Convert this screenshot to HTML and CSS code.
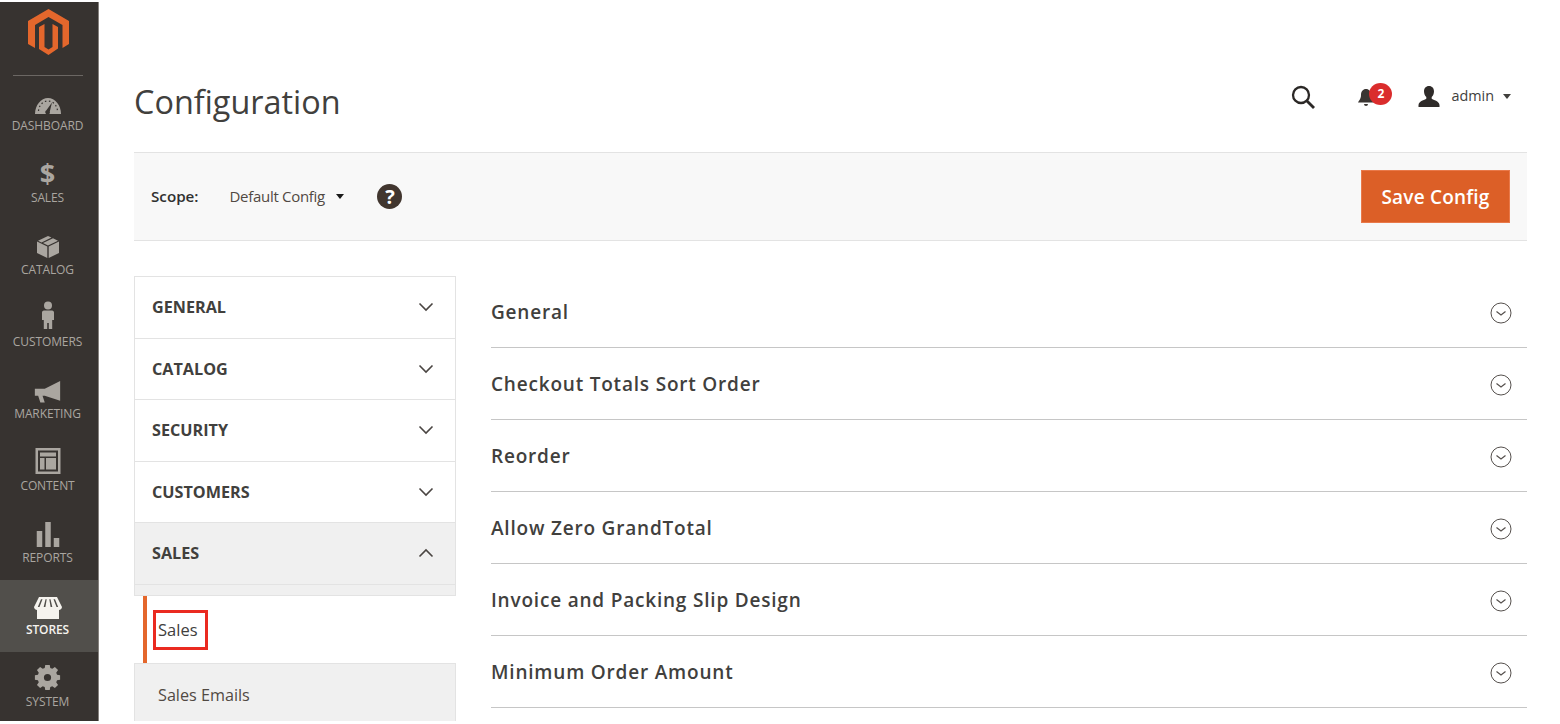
FILE: index.html
```html
<!DOCTYPE html>
<html lang="en">
<head>
<meta charset="utf-8">
<title>Configuration</title>
<link rel="stylesheet" href="styles.css">
</head>
<body>
<div class="page">
  <aside class="menu">
    <div class="logo-wrap">
      <svg class="logo" width="41" height="46" viewBox="28 9 41 46"><path fill="#e4672c" d="M48.5 9 69 21v23l-6.500 4V25L48.500 17 35 25v23l-7-4V21z"/><path fill="#e4672c" d="M39 27l5.500-3v23l4 2.500 4-2.500V24l5.500 3v21.500L48.500 55 39 49z"/></svg>
    </div>
    <nav class="menu-list">
      <a class="menu-item"><svg class="mi" width="30" height="18" viewBox="0 4 30 18"><path fill="#aaa6a0" d="M2 21C2 12 8 5 15 5s13 7 13 16z"/><path stroke="#373330" stroke-width="1.200" stroke-dasharray="1.500 2.500" fill="none" d="M5.500 18C6 12 10 8 15 8s9 4 9.500 10"/><path fill="#373330" d="M19 9.500 16.800 18.500a2.300 2.300 0 1 1-3.400-1.300z"/></svg><span>Dashboard</span></a>
      <a class="menu-item"><span class="dollar">$</span><span>Sales</span></a>
      <a class="menu-item"><svg class="mi" width="30" height="24" viewBox="0 0 30 24"><path fill="#aaa6a0" d="M4 6.500 14.300 11.600V23L4 18zM26 6.500 15.700 11.600V23L26 18zM15 1l3.500 1.600L8.500 7.500 5 5.800zM20 3.300l5 2.500-10 4.700-5-2.400z"/></svg><span>Catalog</span></a>
      <a class="menu-item"><svg class="mi" width="30" height="30" viewBox="0 0 30 30"><circle fill="#aaa6a0" cx="15" cy="4.500" r="4"/><path fill="#aaa6a0" d="M11 9.500h8c1.300 0 2 1 2 2V19h-1.800v9h-3.400v-6h-1.600v6h-3.400v-9H9v-7.500c0-1 .7-2 2-2z"/></svg><span>Customers</span></a>
      <a class="menu-item"><svg class="mi" width="33" height="22" viewBox="0.500 2 30 20"><path fill="#aaa6a0" d="M27 2v18L13 15.500h-2l2 6h-4l-2-6H4V9h9z"/></svg><span>Marketing</span></a>
      <a class="menu-item"><svg class="mi" width="30" height="28" viewBox="0 0 30 28"><path fill="#aaa6a0" fill-rule="evenodd" d="M2.500 1h25v26h-25zM5 3.500v21h20v-21zM7 5.500h16v4H7zM7 11h4.500v11.500H7zM13 11h10v11.500H13z"/></svg><span>Content</span></a>
      <a class="menu-item"><svg class="mi" width="30" height="25" viewBox="2.750 2 30 25"><path fill="#aaa6a0" d="M6.500 11H12v16H6.500zM15 2h5.500v25H15zM23.500 18H29v9h-5.500z"/></svg><span>Reports</span></a>
      <a class="menu-item active"><svg class="mi" width="30" height="24" viewBox="0 -1 30 24"><path fill="#f5f3ee" fill-rule="evenodd" d="M6 1h18l5 10c0 2-2 3-3 3v9H4v-9c-1 0-3-1-3-3zM8 3.300 4.800 11h1.700l3-7.700zM12.500 3.300 10.700 11h1.700l1.300-7.700zM16.300 3.300 17.600 11h1.700l-1.800-7.700zM20.500 3.300l3 7.700h1.700L22 3.300z"/></svg><span>Stores</span></a>
      <a class="menu-item"><svg class="mi" width="27" height="27" viewBox="0 0 30 30"><path fill="#aaa6a0" fill-rule="evenodd" d="M12.500 1h5l.6 3.400 2.200.9 2.900-2 3.500 3.500-2 2.900.9 2.200 3.400.6v5l-3.400.6-.9 2.200 2 2.900-3.500 3.500-2.900-2-2.200.9-.6 3.400h-5l-.6-3.400-2.200-.9-2.900 2-3.500-3.500 2-2.900-.9-2.200-3.400-.6v-5l3.400-.6.900-2.200-2-2.900 3.500-3.500 2.900 2 2.200-.9zM15 11a4 4 0 1 0 0 8 4 4 0 0 0 0-8z"/></svg><span>System</span></a>
    </nav>
  </aside>

  <main class="main">
    <header class="topbar">
      <h1 class="title">Configuration</h1>
      <div class="actions">
        <svg class="search" width="26" height="26" viewBox="0 -1.500 26 26"><circle cx="11" cy="10.500" r="8" fill="none" stroke="#2b2826" stroke-width="2.300"/><path d="M17 16.500l7 7" stroke="#2b2826" stroke-width="2.800" fill="none"/></svg>
        <div class="bell">
          <svg width="18" height="20" viewBox="0 0 18 20"><path fill="#3a3532" d="M9 1c3 0 5 2.500 5 6 0 4 2 5.500 3 7.500H1c1-2 3-3.500 3-7.500 0-3.500 2-6 5-6zM7 16h4a2 2 0 0 1-4 0z"/></svg>
          <span class="badge">2</span>
        </div>
        <div class="user">
          <svg width="24" height="23" viewBox="0 0 24 23"><path fill="#2f2b29" d="M12 1c3.200 0 5 2.300 5 5.300 0 2.500-1 4.700-2.300 5.700v1.800c1.800 1.200 7.300 2 7.800 6.200v2H1.500v-2c.5-4.200 6-5 7.800-6.200V12C8 11 7 8.800 7 6.300 7 3.300 8.800 1 12 1z"/></svg>
          <span class="user-name">admin</span>
          <span class="caret"></span>
        </div>
      </div>
    </header>

    <section class="scope">
      <div class="scope-left">
        <span class="scope-label">Scope:</span>
        <span class="scope-value">Default Config</span>
        <span class="caret scope-caret"></span>
        <span class="help">?</span>
      </div>
      <button class="save">Save Config</button>
    </section>

    <div class="columns">
      <div class="tabs">
        <div class="tab-group">
          <div class="tab"><span>General</span><svg class="chev" width="16" height="10" viewBox="0 0 16 10"><path d="M1.500 1.500 8 8l6.500-6.500" fill="none" stroke="#4a4542" stroke-width="1.600"/></svg></div>
          <div class="tab"><span>Catalog</span><svg class="chev" width="16" height="10" viewBox="0 0 16 10"><path d="M1.500 1.500 8 8l6.500-6.500" fill="none" stroke="#4a4542" stroke-width="1.600"/></svg></div>
          <div class="tab"><span>Security</span><svg class="chev" width="16" height="10" viewBox="0 0 16 10"><path d="M1.500 1.500 8 8l6.500-6.500" fill="none" stroke="#4a4542" stroke-width="1.600"/></svg></div>
          <div class="tab"><span>Customers</span><svg class="chev" width="16" height="10" viewBox="0 0 16 10"><path d="M1.500 1.500 8 8l6.500-6.500" fill="none" stroke="#4a4542" stroke-width="1.600"/></svg></div>
          <div class="tab tab-open"><span>Sales</span><svg class="chev" width="16" height="10" viewBox="0 0 16 10"><path d="M1.500 8.500 8 2l6.500 6.500" fill="none" stroke="#4a4542" stroke-width="1.600"/></svg></div>
          <div class="tab-gap"></div>
        </div>
        <div class="sub-active"><span class="sub-marked">Sales</span></div>
        <div class="sub-item">Sales Emails</div>
      </div>

      <div class="sections">
        <div class="section"><span>General</span><svg class="circle" width="22" height="22" viewBox="0 0 22 22"><circle cx="11" cy="11" r="10" fill="none" stroke="#55504d" stroke-width="1"/><path d="M6.500 9.500 11 13l4.500-3.500" fill="none" stroke="#55504d" stroke-width="1.200"/></svg></div>
        <div class="section"><span>Checkout Totals Sort Order</span><svg class="circle" width="22" height="22" viewBox="0 0 22 22"><circle cx="11" cy="11" r="10" fill="none" stroke="#55504d" stroke-width="1"/><path d="M6.500 9.500 11 13l4.500-3.500" fill="none" stroke="#55504d" stroke-width="1.200"/></svg></div>
        <div class="section"><span>Reorder</span><svg class="circle" width="22" height="22" viewBox="0 0 22 22"><circle cx="11" cy="11" r="10" fill="none" stroke="#55504d" stroke-width="1"/><path d="M6.500 9.500 11 13l4.500-3.500" fill="none" stroke="#55504d" stroke-width="1.200"/></svg></div>
        <div class="section"><span>Allow Zero GrandTotal</span><svg class="circle" width="22" height="22" viewBox="0 0 22 22"><circle cx="11" cy="11" r="10" fill="none" stroke="#55504d" stroke-width="1"/><path d="M6.500 9.500 11 13l4.500-3.500" fill="none" stroke="#55504d" stroke-width="1.200"/></svg></div>
        <div class="section"><span>Invoice and Packing Slip Design</span><svg class="circle" width="22" height="22" viewBox="0 0 22 22"><circle cx="11" cy="11" r="10" fill="none" stroke="#55504d" stroke-width="1"/><path d="M6.500 9.500 11 13l4.500-3.500" fill="none" stroke="#55504d" stroke-width="1.200"/></svg></div>
        <div class="section"><span>Minimum Order Amount</span><svg class="circle" width="22" height="22" viewBox="0 0 22 22"><circle cx="11" cy="11" r="10" fill="none" stroke="#55504d" stroke-width="1"/><path d="M6.500 9.500 11 13l4.500-3.500" fill="none" stroke="#55504d" stroke-width="1.200"/></svg></div>
      </div>
    </div>
  </main>
</div>
</body>
</html>
```
FILE: styles.css
```css
* { box-sizing: border-box; }
html, body { margin: 0; height: 724px; overflow: hidden; background: #fff; }
body { font-family: "Open Sans", sans-serif; color: #41403d; }
.page { display: flex; align-items: flex-start; height: 724px; }

.menu { width: 99px; height: 719px; margin-top: 2px; background: #373330; border-right: 1px solid #86827e; overflow: hidden; flex: none; }
.logo-wrap { height: 74px; margin: 0 15px 0 13px; border-bottom: 1px solid #6b6763; display: flex; justify-content: center; padding: 7px 0 0 1px; }
.logo { display: block; }
.menu-list { display: flex; flex-direction: column; }
.menu-item { height: 72px; flex: none; display: flex; flex-direction: column; align-items: center; justify-content: flex-end; padding: 0 3px 14px 0; color: #aaa6a0; font-size: 12px; line-height: 16px; text-transform: uppercase; letter-spacing: -.1px; }
.menu-item.active { background: #514f4b; color: #f5f3ee; font-weight: 600; }
.mi { display: block; margin-bottom: 3px; flex: none; }
.dollar { font-size: 27px; font-weight: 700; line-height: 30px; margin-bottom: 2px; }

.main { flex: 1; min-width: 0; padding: 0 33px 0 35px; }
.topbar { height: 150px; display: flex; justify-content: space-between; align-items: flex-start; }
.title { margin: 80px 0 0; font-size: 32.400px; line-height: 42px; font-weight: 400; color: #41403d; }
.actions { display: flex; align-items: center; margin-top: 83px; padding-right: 16px; }
.search { display: block; }
.bell { position: relative; margin-left: 41px; width: 35px; height: 26px; }
.bell svg { position: absolute; left: 0; top: 5px; }
.badge { position: absolute; left: 12px; top: 0; width: 23px; height: 22px; border-radius: 50%; background: #da2c2c; color: #fff; font-size: 12px; font-weight: 700; line-height: 22px; text-align: center; }
.user { display: flex; align-items: center; margin-left: 25px; }
.user svg { display: block; margin-right: 10px; }
.user-name { font-size: 14.400px; line-height: 20px; color: #41403d; }
.caret { width: 0; height: 0; border: 4.500px solid transparent; border-top: 5px solid #41403d; border-bottom: 0; margin-left: 9px; display: block; }

.scope { height: 89px; margin-top: 2px; display: flex; align-items: center; justify-content: space-between; background: #f8f8f8; border-top: 1px solid #e3e3e3; border-bottom: 1px solid #e3e3e3; padding: 0 17px; }
.scope-left { display: flex; align-items: center; }
.scope-label { font-size: 15.200px; font-weight: 600; color: #303030; margin-bottom: 2px; }
.scope-value { font-size: 15px; color: #514943; margin: 0 0 2px 31px; letter-spacing: -.3px; }
.scope-caret { margin-left: 11px; border-top-color: #1a1a1a; }
.help { width: 25px; height: 25px; margin-left: 33.500px; border-radius: 50%; background: #41362f; color: #fff; font-size: 20px; font-weight: 700; line-height: 25px; text-align: center; }
.save { width: 149px; height: 53px; border: 1px solid #e9794a; background: #dc5f27; color: #fff; font-family: inherit; font-size: 19px; font-weight: 600; padding: 0; letter-spacing: .2px; }

.columns { display: flex; margin-top: 35px; }
.tabs { width: 322px; flex: none; }
.tab-group { border: 1px solid #e3e3e3; }
.tab { height: 61.500px; border-bottom: 1px solid #e3e3e3; padding: 0 21px 0 17px; display: flex; align-items: center; justify-content: space-between; background: #fff; font-size: 16.200px; font-weight: 700; text-transform: uppercase; color: #41403d; }
.tab-open { background: #f0f0f0; }
.tab-gap { height: 10px; background: #f0f0f0; }
.sub-active { height: 67px; margin-left: 9px; background: #fff; border-left: 4px solid #e4672c; display: flex; align-items: center; font-size: 16.500px; color: #41403d; }
.sub-marked { padding: 4px 5px 4px 2px; border: 3px solid #ea2a20; line-height: 26px; margin: 2px 0 0 6px; width: 55px; }
.sub-item { height: 58px; background: #f0f0f0; border: 1px solid #e3e3e3; border-bottom: 0; padding: 19px 0 0 23px; font-size: 16.200px; line-height: 24px; color: #514943; }

.sections { flex: 1; min-width: 0; margin-left: 35px; }
.section { height: 72px; border-bottom: 1px solid #c6c6c6; display: flex; align-items: center; justify-content: space-between; padding: 1px 15px 0 0; font-size: 19px; font-weight: 600; letter-spacing: .8px; color: #41403d; }
.circle { display: block; margin-top: 2px; }
```
